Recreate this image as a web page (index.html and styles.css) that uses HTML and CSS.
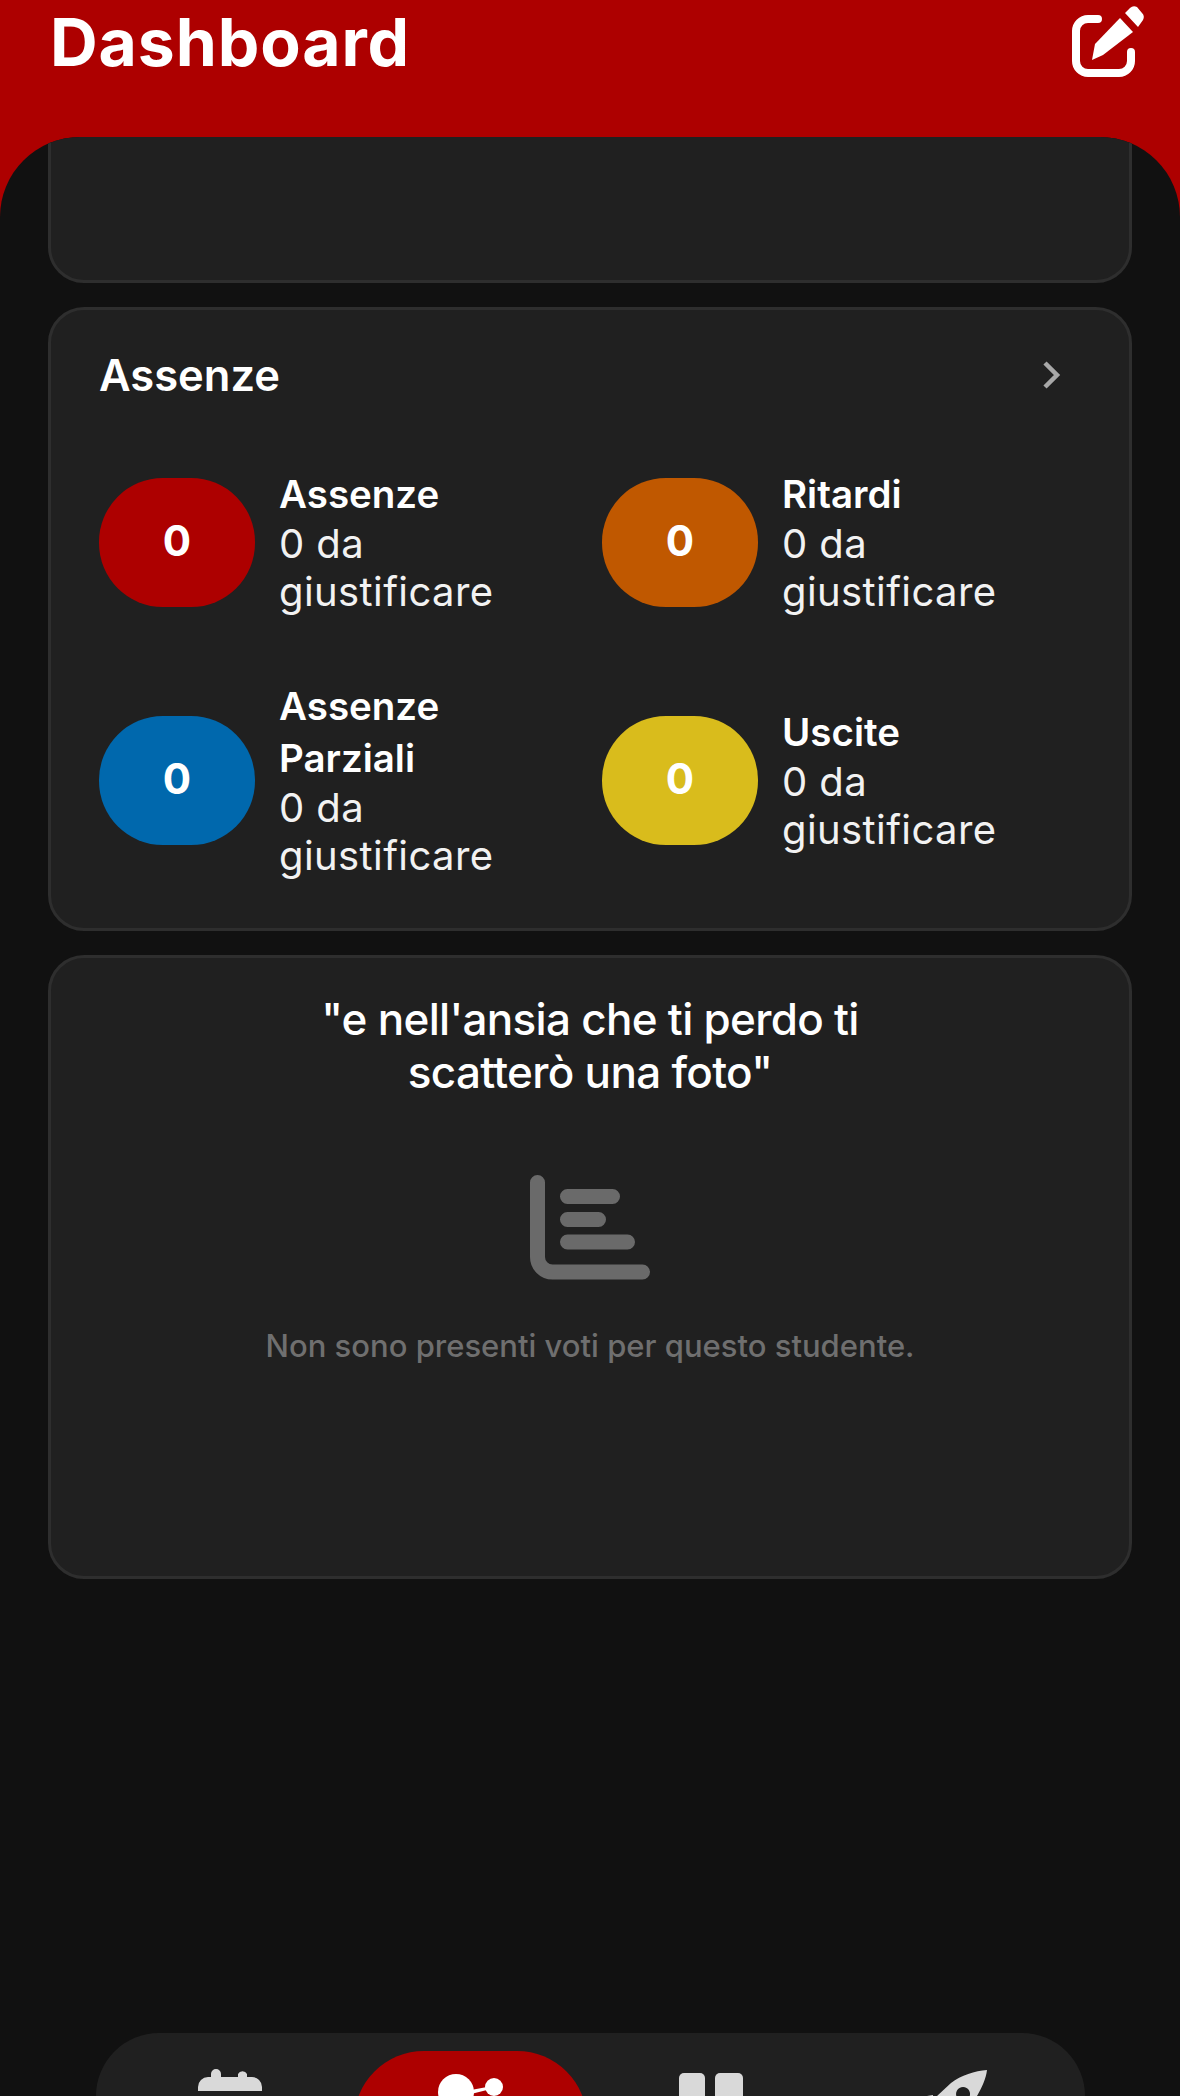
FILE: index.html
```html
<!DOCTYPE html>
<html lang="it">
<head>
    <meta charset="UTF-8">
    <meta name="viewport" content="width=device-width, initial-scale=1.0">
    <title>Dashboard</title>
    <link rel="stylesheet" href="styles.css">
</head>
<body>
    <div class="page">
        <header class="topbar">
            <h1 class="title">Dashboard</h1>
            <svg class="edit-icon" viewBox="0 0 90 90">
                <path class="edit-box" d="M38 19H28a12 12 0 0 0-12 12V61a12 12 0 0 0 12 12H59a12 12 0 0 0 12-12V52"/>
                <path class="edit-fill" d="M60 18 73 32 43 55 32 60 35 44Z"/>
                <path class="edit-fill" d="M65 13 70 8a6 6 0 0 1 7-1l5 6a6 6 0 0 1 1 7l-5 7Z"/>
            </svg>
        </header>

        <main class="content">
            <section class="card card-clipped"></section>

            <section class="card card-absences">
                <div class="card-head">
                    <h2 class="card-title">Assenze</h2>
                    <svg class="chevron" viewBox="0 0 24 30">
                        <path d="M5 3 17 15 5 27"/>
                    </svg>
                </div>
                <div class="stats">
                    <div class="stat">
                        <div class="stat-badge badge-red">0</div>
                        <div class="stat-text">
                            <div class="stat-label">Assenze</div>
                            <div class="stat-sub">0 da giustificare</div>
                        </div>
                    </div>
                    <div class="stat">
                        <div class="stat-badge badge-orange">0</div>
                        <div class="stat-text">
                            <div class="stat-label">Ritardi</div>
                            <div class="stat-sub">0 da giustificare</div>
                        </div>
                    </div>
                    <div class="stat">
                        <div class="stat-badge badge-blue">0</div>
                        <div class="stat-text">
                            <div class="stat-label">Assenze Parziali</div>
                            <div class="stat-sub">0 da giustificare</div>
                        </div>
                    </div>
                    <div class="stat">
                        <div class="stat-badge badge-yellow">0</div>
                        <div class="stat-text">
                            <div class="stat-label">Uscite</div>
                            <div class="stat-sub">0 da giustificare</div>
                        </div>
                    </div>
                </div>
            </section>

            <section class="card card-grades">
                <p class="quote">"e nell'ansia che ti perdo ti<br>scatterò una foto"</p>
                <svg class="chart-icon" viewBox="0 0 120 105">
                    <path d="M7.5 7.5V82a15 15 0 0 0 15 15h90"/>
                    <path d="M37.5 21.5h45M37.5 44.5h31M37.5 67h60"/>
                </svg>
                <p class="empty-text">Non sono presenti voti per questo studente.</p>
            </section>
        </main>

        <nav class="tabbar">
            <div class="tab">
                <svg class="tab-icon" viewBox="0 0 64 27">
                    <path d="M13 8V5a5 5 0 0 1 10 0v3H40V5a5 5 0 0 1 9 0v3h5a10 10 0 0 1 10 10v4H0v-4A10 10 0 0 1 10 8Z"/>
                </svg>
            </div>
            <div class="tab tab-active">
                <svg class="tab-icon" viewBox="0 0 70 27">
                    <circle cx="21" cy="23" r="18"/>
                    <circle cx="59" cy="18" r="9"/>
                    <path d="M36 21 52 18 52 21 36 25Z"/>
                </svg>
            </div>
            <div class="tab">
                <svg class="tab-icon" viewBox="0 0 64 27">
                    <rect x="0" y="4" width="26" height="40" rx="5"/>
                    <rect x="36" y="4" width="28" height="40" rx="5"/>
                </svg>
            </div>
            <div class="tab">
                <svg class="tab-icon icon-rocket" viewBox="0 0 72 27">
                    <path fill-rule="evenodd" d="M72 1C60 2 46 6 36 14L22 27H62C67 18 71 10 72 1ZM48 18a7 7 0 1 0 .1 0ZM12 27l6-1 0 1Z"/>
                </svg>
            </div>
        </nav>
    </div>
</body>
</html>
```

FILE: styles.css
```css
* {
    box-sizing: border-box;
}

body {
    margin: 0;
    background: #111111;
    font-family: 'Inter', sans-serif;
    color: #ffffff;
}

.page {
    display: flex;
    flex-direction: column;
    height: 2096px;
    overflow: hidden;
}

.topbar {
    display: flex;
    justify-content: space-between;
    align-items: flex-start;
    height: 217px;
    margin-bottom: -80px;
    padding-left: 50px;
    padding-right: 30px;
    background: #ad0000;
}

.title {
    margin: 0;
    font-size: 66px;
    font-weight: 700;
    letter-spacing: 0.9px;
    line-height: 84px;
}

.edit-icon {
    width: 90px;
    height: 90px;
}

.edit-box {
    fill: none;
    stroke: #ffffff;
    stroke-width: 8;
    stroke-linecap: round;
}

.edit-fill {
    fill: #ffffff;
}

.content {
    flex: 1;
    min-height: 0;
    overflow: hidden;
    padding: 0 48px;
    background: #111111;
    border-radius: 80px 80px 0 0;
}

.card {
    background: #202020;
    border: 3px solid #2e2e2e;
    border-radius: 36px;
    margin-bottom: 24px;
}

.card-clipped {
    height: 176px;
    margin-top: -30px;
}

.card-absences {
    height: 624px;
    padding: 0 48px;
}

.card-head {
    display: flex;
    justify-content: space-between;
    align-items: center;
    height: 130px;
    padding-right: 17px;
}

.card-title {
    margin: 0;
    font-size: 43.5px;
    font-weight: 600;
}

.chevron {
    width: 24px;
    height: 30px;
    fill: none;
    stroke: #a8a8a8;
    stroke-width: 4.5;
}

.stats {
    display: grid;
    grid-template-columns: 503px 1fr;
    row-gap: 30px;
    margin-top: -2px;
}

.stat {
    display: flex;
    align-items: center;
    gap: 24px;
    min-height: 208px;
}

.stat-badge {
    flex: none;
    display: flex;
    justify-content: center;
    align-items: center;
    width: 156px;
    height: 129px;
    padding-bottom: 4px;
    border-radius: 64px;
    font-size: 42px;
    font-weight: 700;
}

.badge-red {
    background: #ad0000;
}

.badge-orange {
    background: #c05800;
}

.badge-blue {
    background: #0068ad;
}

.badge-yellow {
    background: #d9bc1c;
}

.stat-text {
    width: 240px;
}

.stat-label {
    font-size: 38.5px;
    font-weight: 600;
    line-height: 52px;
}

.stat-sub {
    font-size: 40px;
    letter-spacing: 0.4px;
    line-height: 48px;
    color: #f2f2f2;
}

.card-grades {
    display: flex;
    flex-direction: column;
    align-items: center;
    height: 624px;
    padding-top: 35px;
}

.quote {
    margin: 0;
    font-size: 44px;
    font-weight: 500;
    letter-spacing: -0.7px;
    line-height: 53px;
    text-align: center;
}

.chart-icon {
    width: 120px;
    height: 105px;
    margin-top: 76px;
    fill: none;
    stroke: #6a6a6a;
    stroke-width: 15;
    stroke-linecap: round;
}

.empty-text {
    margin: 47px 0 0;
    font-size: 31px;
    font-weight: 500;
    color: #6f6f6f;
}

.tabbar {
    flex: none;
    display: flex;
    height: 63px;
    margin: 0 95px 0 96px;
    padding: 18px 14px 0;
    overflow: hidden;
    background: #202020;
    border-radius: 85px 85px 0 0;
}

.tab {
    flex: 1;
    display: flex;
    justify-content: center;
    align-items: flex-start;
    height: 140px;
    margin: 0 4px;
}

.tab-active {
    background: #ad0000;
    border-radius: 70px;
}

.tab-icon {
    width: 64px;
    height: 27px;
    margin-top: 18px;
    fill: #d9d9d9;
}

.tab-active .tab-icon {
    width: 70px;
    fill: #ffffff;
}

.tab .icon-rocket {
    width: 72px;
}
```
